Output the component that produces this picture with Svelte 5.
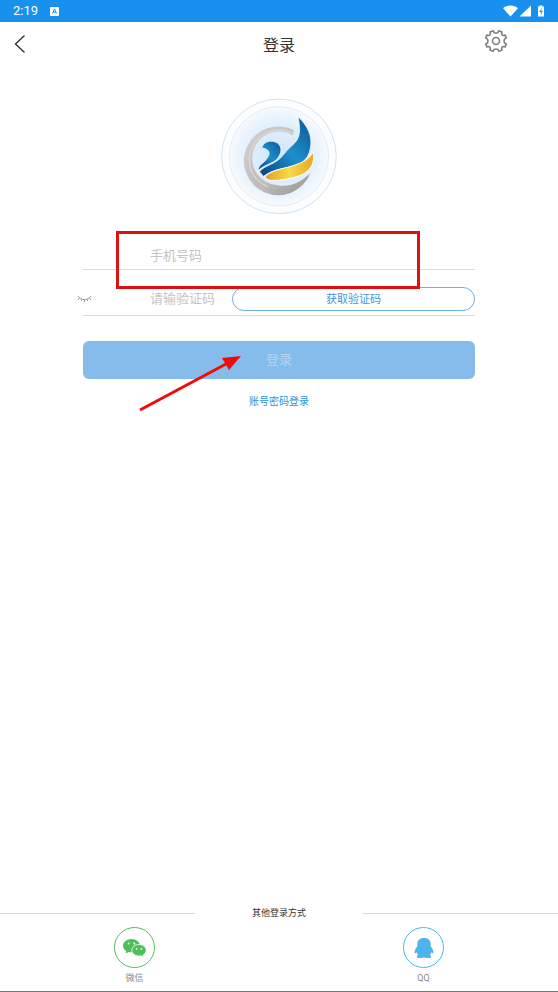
<script lang="ts">
  let phone = $state("");
  let code = $state("");
</script>

<div class="page">
  <div class="status-bar">
    <span class="clock">2:19</span>
    <svg class="app-badge" viewBox="0 0 9 9" aria-hidden="true">
      <rect width="9" height="9" rx="1" fill="#fff" />
      <path d="M2.5 6.5 4.5 2l2 4.5M3.2 5.2h2.6" fill="none" stroke="#1890ee" />
    </svg>
    <svg class="signals" viewBox="0 0 42 12" aria-hidden="true">
      <path d="M0 3.2C4-.4 11-.4 15 3.2L7.5 11.600Z" fill="#fff" />
      <path d="M16.500 11.500 28 .5v11Z" fill="#fff" />
      <path d="M35 1.600h1.500V.4h3v1.200H41v10h-6Z" fill="#fff" />
      <path d="m38.600 3-2.300 4h1.500v3l2-4h-1.500Z" fill="#1890ee" />
    </svg>
  </div>

  <header class="header">
    <button class="icon-button" aria-label="返回">
      <svg width="12" height="20" viewBox="0 0 12 20">
        <path d="M10.500 1.500 1.500 10l9 8.500" fill="none" stroke="#333" stroke-width="1.400" />
      </svg>
    </button>
    <h1>登录</h1>
    <button class="icon-button settings" aria-label="设置">
      <svg width="24" height="24" viewBox="0 0 24 24" fill="none" stroke="#808080" stroke-width="1.600">
        <path
          d="M9 1.800 10.200 3.600Q12 4.500 13.800 3.600L15 1.800 18 3 17.600 5.100Q18 6.200 19 6.500L21.100 6.100 22.300 9 20.500 10.200Q19.600 12 20.500 13.800L22.300 15 21.100 17.900 19 17.500Q18 17.800 17.600 18.900L18 21 15 22.200 13.800 20.400Q12 19.500 10.200 20.400L9 22.200 6 21 6.400 18.900Q6 17.800 5 17.500L2.900 17.900 1.700 15 3.500 13.800Q4.400 12 3.500 10.200L1.700 9 2.900 6.100 5 6.500Q6 6.200 6.400 5.100L6 3Z"
          stroke-linejoin="round"
        />
        <circle cx="12" cy="12" r="3.500" />
      </svg>
    </button>
  </header>

  <main>
    <svg class="logo" viewBox="0 0 384 384" role="img" aria-label="logo">
      <defs>
        <radialGradient id="halo">
          <stop offset="0" stop-color="#cfe5fb" />
          <stop offset="0.600" stop-color="#dfeefc" />
          <stop offset="1" stop-color="#f6fafe" />
        </radialGradient>
        <linearGradient id="ring" x1="0" y1="0" x2="1" y2="1">
          <stop offset="0" stop-color="#d4d2d1" />
          <stop offset="0.600" stop-color="#bdbab9" />
          <stop offset="1" stop-color="#959394" />
        </linearGradient>
        <linearGradient id="blue" x1="0" y1="1" x2="1" y2="0">
          <stop offset="0" stop-color="#083f86" />
          <stop offset="0.500" stop-color="#1d8fcb" />
          <stop offset="1" stop-color="#0d5597" />
        </linearGradient>
        <linearGradient id="gold" x1="0" y1="0" x2="1" y2="0">
          <stop offset="0" stop-color="#df9d2c" />
          <stop offset="0.500" stop-color="#f9d944" />
          <stop offset="1" stop-color="#e9a62a" />
        </linearGradient>
      </defs>
      <circle cx="192" cy="193" r="172" fill="#fcfdff" stroke="#b9d4e6" stroke-width="2" />
      <circle cx="192" cy="193" r="149" fill="url(#halo)" stroke="#d3e5f5" stroke-width="2" />
      <path
        d="M237 115A103 103 0 1 0 286 243C259 270 225 287 187 280A81 81 0 1 1 233 129Z"
        fill="url(#ring)"
      />
      <path
        d="M231 122A91 91 0 0 0 104 222Q116 266 158 284"
        fill="none"
        stroke="#e3e1df"
        stroke-width="3"
      />
      <path
        d="M140 168C145 148 169 142 187 153C203 165 200 185 185 202C173 216 151 216 130 235C130 218 147 214 157 198C165 187 164 177 154 172Q147 168 140 168Z"
        fill="url(#blue)"
        stroke="#fff"
        stroke-width="2"
      />
      <path
        d="M249 74C279 102 293 134 286 169C280 206 253 221 218 227C180 233 161 241 145 253L134 239C150 218 181 219 204 190C216 174 226 165 237 155C258 136 256 107 249 74Z"
        fill="url(#blue)"
        stroke="#fff"
        stroke-width="2"
      />
      <path
        d="M295 179C282 205 253 216 217 226C180 235 163 240 149 256L160 264C181 268 231 262 263 247C291 231 299 211 295 179Z"
        fill="url(#gold)"
        stroke="#fff"
        stroke-width="3"
      />
    </svg>

    <form class="form" onsubmit={(event) => event.preventDefault()}>
      <div class="field">
        <input type="tel" placeholder="手机号码" aria-label="手机号码" bind:value={phone} />
      </div>
      <div class="field code-field">
        <button type="button" class="icon-button eye" aria-label="显示验证码">
          <svg width="15" height="8" viewBox="0 0 15 8" fill="none" stroke="#9a9a9a">
            <path d="M1 1C4 5.800 11 5.800 14 1M2.500 3 1 5M7.500 4.600V7M4.900 4.200 4.300 6M10.100 4.200l.6 1.800M12.500 3 14 5" />
          </svg>
        </button>
        <input type="text" placeholder="请输验证码" aria-label="验证码" bind:value={code} />
        <button type="button" class="send-code">获取验证码</button>
      </div>
      <button class="submit">登录</button>
      <a class="switch-mode" href="#password">账号密码登录</a>

      <div class="highlight"></div>
      <svg class="arrow" width="104" height="58" viewBox="0 0 104 58" aria-hidden="true">
        <path d="M2 56 88 10" stroke="#f10a0a" stroke-width="3" />
        <path d="M103 2 84 4l7 12Z" fill="#f10a0a" />
      </svg>
    </form>
  </main>

  <footer>
    <div class="divider"><span>其他登录方式</span></div>
    <div class="providers">
      <button class="provider wechat">
        <span class="circle">
          <svg width="24" height="20" viewBox="0 0 24 20">
            <path
              d="M8.500 1C3.800 1 0 4 0 7.700c0 2.200 1.300 4 3.300 5.200L2.500 15.500l3.200-1.600q1.300.4 2.800.4C13.200 14.300 17 11.300 17 7.700S13.200 1 8.500 1Z"
              fill="#4fbf5b"
            />
            <path
              d="M16 6.500c-4 0-7.200 2.500-7.200 5.700S12 18 16 18q1.300 0 2.400-.3l2.600 1.400-.7-2.300c1.700-1 2.900-2.700 2.900-4.600C23.200 9 20 6.500 16 6.500Z"
              fill="#4fbf5b"
              stroke="#fff"
              stroke-width="0.800"
            />
            <g fill="#fff">
              <circle cx="5.700" cy="5.500" r="1" />
              <circle cx="11.300" cy="5.500" r="1" />
              <circle cx="13.600" cy="10.800" r="0.900" />
              <circle cx="18.400" cy="10.800" r="0.900" />
            </g>
          </svg>
        </span>
        微信
      </button>
      <button class="provider qq">
        <span class="circle">
          <svg width="20" height="22" viewBox="0 0 20 22">
            <path
              d="M10 1C5.500 1 3.300 3.600 3.300 7.200V9.200C1.500 11.500.3 13.700.6 15.800c.2.900 1.100.6 2.100-.5q.4 1.500 1.400 2.700C2.500 18.800 2.300 21 5 21h3.500L10 20.300 11.500 21H15c2.700 0 2.500-2.200.9-3q1-1.200 1.400-2.700c1 1.100 1.900 1.400 2.100.5.300-2.100-.9-4.300-2.700-6.600V7.200C16.700 3.600 14.500 1 10 1Z"
              fill="#4db4ec"
            />
          </svg>
        </span>
        QQ
      </button>
    </div>
  </footer>
</div>

<style>
  :global(body) {
    margin: 0;
    background: #fff;
  }

  .page {
    box-sizing: border-box;
    min-height: 100vh;
    display: flex;
    flex-direction: column;
    border-bottom: 1px solid #777;
    font-family: Roboto, "Noto Sans CJK SC", sans-serif;
    color: #333;
  }

  button {
    padding: 0;
    border: 0;
    background: transparent;
    font-family: inherit;
    cursor: pointer;
  }

  .status-bar {
    height: 22px;
    display: flex;
    align-items: center;
    padding: 0 13px;
    background: #1890ee;
    color: #fff;
  }

  .clock {
    font-size: 13px;
    line-height: 22px;
  }

  .app-badge {
    width: 9px;
    margin-left: 12px;
  }

  .signals {
    width: 42px;
    margin-left: auto;
  }

  .header {
    height: 44px;
    display: grid;
    grid-template-columns: 1fr auto 1fr;
    align-items: center;
    padding: 0 14px;
  }

  .icon-button {
    display: flex;
    align-items: center;
    justify-content: center;
    justify-self: start;
  }

  h1 {
    margin: 0;
    padding-top: 3px;
    font-size: 16px;
    font-weight: 400;
    line-height: 24px;
  }

  .settings {
    justify-self: end;
    margin-right: 36px;
    padding-bottom: 6px;
  }

  main {
    flex: 1;
    display: flex;
    flex-direction: column;
    padding-top: 26px;
  }

  .logo {
    width: 128px;
    height: 128px;
    align-self: center;
  }

  .form {
    position: relative;
    display: flex;
    flex-direction: column;
    margin: 0 83px;
    padding-top: 20px;
  }

  .field {
    box-sizing: border-box;
    height: 30px;
    display: flex;
    align-items: center;
    padding: 2px 0 0 67px;
    border-bottom: 1px solid #dcdcdc;
  }

  .code-field {
    height: 46px;
    padding: 12px 0 0;
  }

  input {
    flex: 1;
    min-width: 0;
    padding: 0;
    border: 0;
    outline: 0;
    background: transparent;
    font-family: inherit;
    font-size: 13px;
    line-height: 20px;
    color: #333;
  }

  input::placeholder {
    color: #c4c4c4;
    opacity: 1;
  }

  .eye {
    width: 15px;
    margin-left: -6px;
    margin-right: 58px;
  }

  .send-code {
    box-sizing: border-box;
    width: 62%;
    height: 24px;
    padding-bottom: 2px;
    border: 1px solid #6fb0e0;
    border-radius: 12px;
    font-size: 11px;
    color: #3d97dc;
  }

  .submit {
    height: 38px;
    margin-top: 25px;
    padding-bottom: 3px;
    border-radius: 6px;
    background: #86bcec;
    font-size: 13px;
    color: #b4d3f0;
  }

  .switch-mode {
    align-self: center;
    margin-top: 15px;
    font-size: 10px;
    line-height: 16px;
    color: #2f93dc;
    text-decoration: none;
  }

  /* tutorial marks over the form */
  .highlight {
    position: absolute;
    box-sizing: border-box;
    top: 11px;
    left: 33px;
    right: 55px;
    height: 58px;
    border: 3px solid #dd1111;
    pointer-events: none;
  }

  .arrow {
    position: absolute;
    top: 134px;
    left: 55px;
    pointer-events: none;
  }

  .divider {
    display: flex;
    align-items: center;
    font-size: 9px;
    line-height: 14px;
  }

  .divider::before,
  .divider::after {
    content: "";
    flex: 1;
    height: 1px;
    background: #d8d8d8;
  }

  .divider span {
    width: 30%;
    text-align: center;
  }

  .providers {
    display: flex;
    justify-content: space-between;
    padding: 7px 114px 6px;
  }

  .provider {
    display: flex;
    flex-direction: column;
    align-items: center;
    gap: 3px;
    font-size: 9px;
    line-height: 14px;
    color: #888;
  }

  .circle {
    box-sizing: border-box;
    width: 41px;
    height: 41px;
    display: flex;
    align-items: center;
    justify-content: center;
    border: 1px solid #4fbf5b;
    border-radius: 50%;
  }

  .qq .circle {
    border-color: #4db4ec;
  }
</style>
